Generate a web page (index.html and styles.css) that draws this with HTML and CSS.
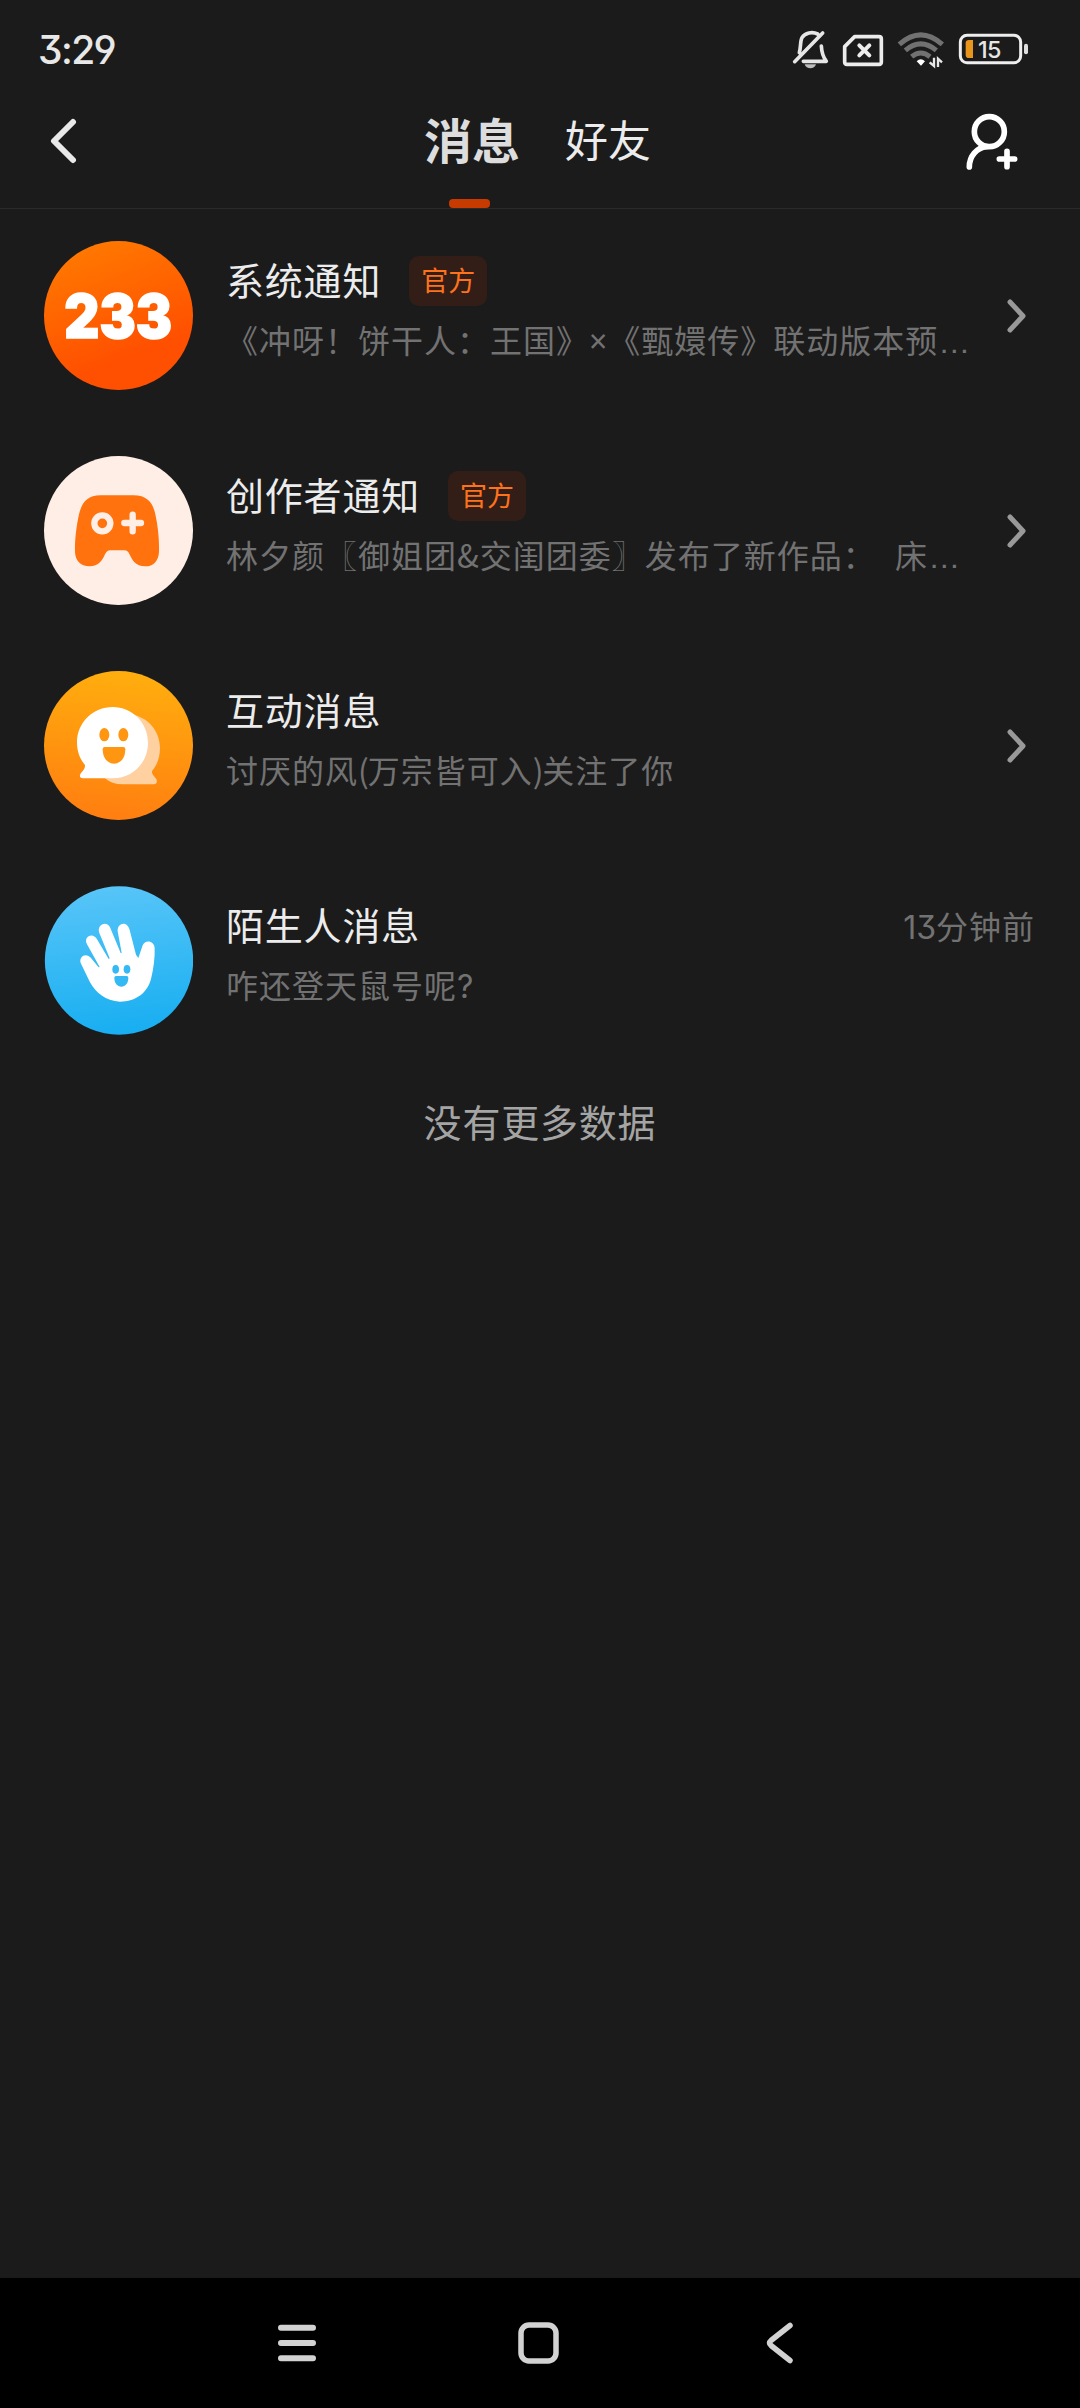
FILE: index.html
```html
<!DOCTYPE html>
<html lang="zh-CN">
<head>
<meta charset="utf-8">
<title>消息</title>
<link rel="stylesheet" href="styles.css">
</head>
<body>
<div class="screen">
  <div class="status-bar">
    <span class="clock">3:29</span>
    <div class="status-icons">
      <svg class="icon-bell" viewBox="99 90 111 120" fill="none" stroke="#e6e6e6" stroke-width="11" stroke-linecap="round" stroke-linejoin="round">
        <path d="M107 185L191 99M176 102C160 94 138 98 129 113C123 124 126 142 121 158M133 184H202C193 172 188 158 187 138"/>
        <path d="M137 193H171C167 209 141 209 137 193Z" fill="#bdbdbd" stroke="none"/>
      </svg>
      <svg class="icon-sim" viewBox="249 90 126 120" fill="none" stroke="#ececec" stroke-linecap="round" stroke-linejoin="round">
        <path stroke-width="11" d="M287 110H360Q367 110 367 117V186Q367 193 360 193H264Q257 193 257 186V140Z"/>
        <path stroke-width="12" d="M301 136L331 166M331 136L301 166"/>
      </svg>
      <svg class="icon-wifi" viewBox="414 90 144 120" fill="none" stroke="#717171" stroke-width="15">
        <path d="M421 133Q485 76 550 133M439 151Q485 112 532 151M458 170Q485 148 513 170"/>
        <path d="M473 184Q485 171 498 184L486 197Z" fill="#fff" stroke="none"/>
        <path stroke="#e8e8e8" stroke-width="7" d="M512 187L525 198V173M549 187L537 176V201"/>
      </svg>
      <svg class="icon-battery" viewBox="597 90 213 120">
        <rect x="604" y="106" width="181" height="82" rx="20" fill="none" stroke="#eee" stroke-width="9"/>
        <path d="M642 120V174H630Q620 174 620 164V130Q620 120 630 120Z" fill="#e8951b"/>
        <rect x="795" y="131" width="12" height="32" rx="6" fill="#ddd"/>
        <text class="battery-text" x="657" y="174">15</text>
      </svg>
    </div>
  </div>

  <header class="header">
    <svg class="back" viewBox="0 0 28 46" fill="none" stroke="#e9e9e9" stroke-width="6" stroke-linecap="round" stroke-linejoin="round"><path d="M24 4L5 23L24 42"/></svg>
    <nav class="tabs">
      <span class="tab tab-active">消息</span>
      <span class="tab">好友</span>
    </nav>
    <svg class="add-friend" viewBox="615 339 162 177" fill="none" stroke="#fff" stroke-width="17" stroke-linecap="round">
      <circle cx="688" cy="398" r="45"/>
      <path d="M628 504C628 472 650 446 680 443M718 480H764M741 457V503"/>
    </svg>
  </header>

  <main class="list">
    <article class="row">
      <svg class="avatar" viewBox="42 47 447 447">
        <defs><linearGradient id="g1" x1=".25" y1="0" x2=".55" y2=".8"><stop offset="0" stop-color="#ff7a00"/><stop offset="1" stop-color="#ff4f00"/></linearGradient></defs>
        <circle cx="265.500" cy="270.500" r="223.500" fill="url(#g1)"/>
        <text class="logo-text" x="103" y="337" textLength="323" lengthAdjust="spacingAndGlyphs">233</text>
      </svg>
      <div class="body">
        <div class="line"><h2 class="title">系统通知</h2><span class="badge">官方</span></div>
        <p class="preview">《冲呀！饼干人：王国》<span class="latin">×</span>《甄嬛传》联动版本预<span class="dots">…</span></p>
      </div>
      <svg class="chevron" viewBox="0 0 24 38"><path d="M5 5L18 19L5 33"/></svg>
    </article>

    <article class="row">
      <svg class="avatar" viewBox="42 47 447 447">
        <circle cx="265.500" cy="270.500" r="223.500" fill="#ffeee6"/>
        <path d="M211 165H310C354 165 369 190 376 222C384 258 388 297 387 334C386 361 371 378 345 378C317 378 307 360 298 341Q293 330 284 330H240Q231 330 225 342C216 362 205 378 179 378C151 378 136 360 135 335C134 302 139 258 147 222C155 188 172 165 211 165Z" fill="#ff720d"/>
        <circle cx="217" cy="249" r="24" fill="none" stroke="#ffeee6" stroke-width="19"/>
        <path d="M283 248H333M308 223V273" stroke="#ffeee6" stroke-width="19" stroke-linecap="round"/>
      </svg>
      <div class="body">
        <div class="line"><h2 class="title">创作者通知</h2><span class="badge">官方</span></div>
        <p class="preview">林夕颜〖御姐团&amp;交闺团委〗发布了新作品：<span class="gap">  </span>床<span class="dots">…</span></p>
      </div>
      <svg class="chevron" viewBox="0 0 24 38"><path d="M5 5L18 19L5 33"/></svg>
    </article>

    <article class="row">
      <svg class="avatar" viewBox="42 47 447 447">
        <defs><linearGradient id="g3" x1=".55" y1="0" x2=".45" y2="1"><stop offset="0" stop-color="#ffae0e"/><stop offset="1" stop-color="#ff7e10"/></linearGradient></defs>
        <circle cx="265.500" cy="270.500" r="223.500" fill="url(#g3)"/>
        <path d="M285 175C345 175 390 221 390 278C390 306 381 330 366 347C364 356 373 364 379 371C383 379 380 387 371 387H278C226 387 200 350 190 300Z" fill="#ffd0a0"/>
        <path d="M248 155C306 155 354 202 354 262C354 323 307 369 248 369H158C149 369 147 360 153 353C160 345 166 339 165 329C150 311 141 288 141 262C141 201 189 155 248 155Z" fill="#fff"/>
        <g fill="#ff9612"><ellipse cx="223" cy="238" rx="15" ry="20"/><ellipse cx="280" cy="238" rx="15" ry="20"/><path d="M224 275H280Q286 275 286 282C286 308 272 325 252 325S218 308 218 282Q218 275 224 275Z"/></g>
      </svg>
      <div class="body">
        <div class="line"><h2 class="title">互动消息</h2></div>
        <p class="preview">讨厌的风<span class="paren">(</span>万宗皆可入<span class="paren">)</span>关注了你</p>
      </div>
      <svg class="chevron" viewBox="0 0 24 38"><path d="M5 5L18 19L5 33"/></svg>
    </article>

    <article class="row">
      <svg class="avatar" viewBox="42 47 447 447">
        <defs><linearGradient id="g4" x1=".45" y1="0" x2=".55" y2="1"><stop offset="0" stop-color="#57c5f8"/><stop offset="1" stop-color="#17aef1"/></linearGradient></defs>
        <circle cx="267" cy="270.500" r="222.500" fill="url(#g4)"/>
        <path d="M152 278C146 259 167 246 181 261L206 291L209 290L171 222C159 200 188 184 201 207L236 266L239 264L208 188C199 163 231 149 241 173L272 248H275L263 183C261 157 292 150 299 179L318 253L325 263L338 225C345 206 374 211 374 234C375 261 371 294 363 326C352 367 318 394 270 394C227 393 197 366 180 336Z" fill="#fff"/>
        <g fill="#34b9f4"><ellipse cx="257" cy="297" rx="10" ry="13"/><ellipse cx="291" cy="297" rx="10" ry="13"/><path d="M258 317H290Q295 317 295 322C295 338 286 349 274 349S253 338 253 322Q253 317 258 317Z"/></g>
      </svg>
      <div class="body">
        <div class="line"><h2 class="title">陌生人消息</h2><time class="time"><span class="num">13</span>分钟前</time></div>
        <p class="preview">咋还登天鼠号呢<span class="num">?</span></p>
      </div>
    </article>
    <p class="list-end">没有更多数据</p>
  </main>

  <footer class="nav-bar">
    <svg class="nav-icon" viewBox="0 0 48 48"><path stroke-width="6" d="M8 8.700H40M8 24H40M8 39.300H40"/></svg>
    <svg class="nav-icon" viewBox="0 0 48 48"><rect x="5" y="6" width="35" height="36" rx="8" stroke-width="5.500"/></svg>
    <svg class="nav-icon" viewBox="0 0 48 48"><path stroke-width="5.500" d="M31 6.500L12 21.500Q9 24 12 26.500L31 41.500"/></svg>
  </footer>
</div>
</body>
</html>
```

FILE: styles.css
```css
* { box-sizing: border-box; }

body {
  margin: 0;
  background: #1b1b1b;
  font-family: "Noto Sans CJK SC", sans-serif;
}

h2, p { margin: 0; }

svg { display: block; flex: none; }

.screen {
  width: 1080px;
  height: 2408px;
  display: flex;
  flex-direction: column;
  background: #1b1b1b;
  color: #ececec;
}

/* status bar */
.status-bar {
  height: 74px;
  padding: 30px 51px 0 38px;
  display: flex;
  justify-content: space-between;
}

.clock {
  font: 500 39px/40px Inter, sans-serif;
  font-feature-settings: "cv09", "ss01";
  letter-spacing: -1.6px;
  color: #e8e8e8;
}

.status-icons { display: flex; }
.status-icons svg { height: 40px; }
.icon-bell { width: 37px; margin-right: 13px; }
.icon-sim { width: 42px; margin-right: 13px; }
.icon-wifi { width: 48px; margin-right: 13px; }
.icon-battery { width: 71px; }

.battery-text {
  font: 500 70px Inter, sans-serif;
  letter-spacing: -2px;
  fill: #e6e6e6;
}

/* header */
.header {
  height: 135px;
  padding: 0 61px 0 49px;
  display: grid;
  grid-template-columns: 1fr auto 1fr;
  align-items: center;
  border-bottom: 1px solid #2b2b2b;
}

.back { width: 28px; height: 46px; }

.add-friend {
  width: 54px;
  height: 59px;
  justify-self: end;
}

.tabs {
  display: flex;
  gap: 45px;
  height: 134px;
  margin-left: 7px;
}

.tab {
  font-size: 43px;
  line-height: 128px;
}

.tab-active {
  position: relative;
  font-size: 48px;
  font-weight: 700;
  color: #ddd;
}

.tab-active::after {
  content: "";
  position: absolute;
  left: 25px;
  bottom: 0;
  width: 41px;
  height: 9px;
  border-radius: 4px;
  background: #c73a00;
}

/* message list */
.list {
  flex: 1;
  margin-top: -1px;
}

.row {
  height: 215px;
  padding: 0 51px 0 44px;
  display: flex;
  align-items: center;
}

.avatar {
  width: 149px;
  height: 149px;
  margin-right: 33px;
}

.logo-text {
  font: 900 181px Inter, sans-serif;
  fill: #fff;
  stroke: #fff;
  stroke-width: 5;
}

.body {
  flex: 1;
  min-width: 0;
  padding-bottom: 10px;
}

.line {
  height: 60px;
  margin-right: -6px;
  display: flex;
  align-items: center;
}

.title {
  font-size: 38px;
  font-weight: 400;
  line-height: 60px;
  letter-spacing: 0.8px;
  margin-top: -3px;
}

.badge {
  margin-left: 28px;
  width: 78px;
  height: 50px;
  border-radius: 10px;
  background: #331e17;
  color: #ff721c;
  font-size: 27px;
  line-height: 48px;
  text-align: center;
}

.preview {
  height: 60px;
  font-size: 32px;
  line-height: 56px;
  letter-spacing: 1px;
  white-space: pre;
  color: #727272;
}

.preview span { line-height: 0; }
.latin { font-family: "Noto Sans", sans-serif; }
.dots { font-family: "Liberation Sans", sans-serif; }
.gap { letter-spacing: 2.5px; }
.paren { letter-spacing: -1.2px; }

.num {
  font-family: Inter, sans-serif;
  font-feature-settings: "cv09", "ss01";
  letter-spacing: 0;
  line-height: 0;
}

.time {
  margin-left: auto;
  margin-top: -2px;
  font-size: 32px;
  line-height: 60px;
  letter-spacing: 1px;
  color: #727272;
}

.chevron {
  width: 24px;
  height: 38px;
  fill: none;
  stroke: #999;
  stroke-width: 5;
  stroke-linecap: round;
  stroke-linejoin: round;
}

.list-end {
  height: 106px;
  text-align: center;
  font-size: 38px;
  line-height: 105px;
  letter-spacing: 0.8px;
  color: #a4a4a4;
}

/* system navigation */
.nav-bar {
  height: 130px;
  padding: 0 273px;
  background: #000;
  display: flex;
  justify-content: space-between;
  align-items: center;
}

.nav-icon {
  width: 48px;
  height: 48px;
  fill: none;
  stroke: #d2d2d2;
  stroke-linecap: round;
  stroke-linejoin: round;
}
```
